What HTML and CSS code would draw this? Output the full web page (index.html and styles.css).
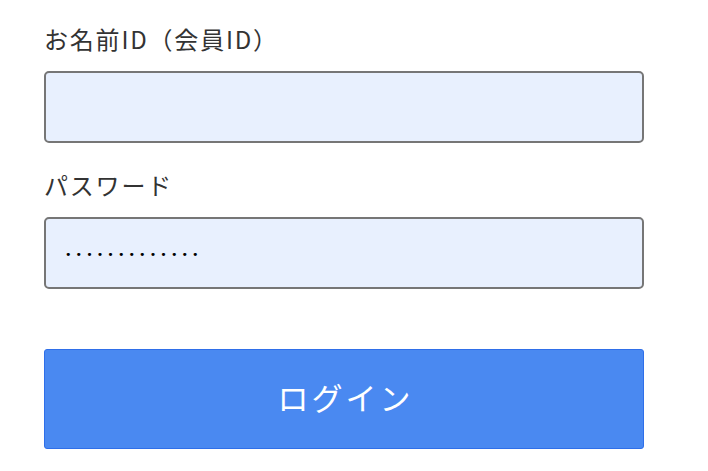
FILE: index.html
```html
<!DOCTYPE html>
<html lang="ja">
<head>
<meta charset="utf-8">
<link rel="stylesheet" href="styles.css">
</head>
<body>
<form class="login">
  <div class="field">
    <label class="label">お名前ID（会員ID）</label>
    <div class="input"></div>
  </div>
  <div class="field">
    <label class="label">パスワード</label>
    <div class="input"><span class="dots">•••••••••••••</span></div>
  </div>
  <button type="button" class="btn">ログイン</button>
</form>
</body>
</html>
```
FILE: styles.css
```css
html, body {
  margin: 0;
  padding: 0;
  background: #fff;
}
body {
  font-family: "Noto Sans CJK JP", "Noto Sans", sans-serif;
  color: #333;
}
.login {
  width: 600px;
  padding: 24px 0 0 44px;
  display: flex;
  flex-direction: column;
}
.field {
  display: flex;
  flex-direction: column;
  margin-bottom: 27px;
}
.field + .field {
  margin-bottom: 60px;
}
.label {
  display: block;
  font-size: 24px;
  line-height: 30px;
  height: 30px;
  margin-bottom: 17px;
  letter-spacing: 1.8px;
}
.input {
  box-sizing: border-box;
  height: 72px;
  width: 600px;
  background: #e8f0fe;
  border: 2px solid #767676;
  border-radius: 5px;
  display: flex;
  align-items: center;
  padding-left: 19px;
}
.dots {
  font-family: "DejaVu Sans", sans-serif;
  font-size: 11px;
  letter-spacing: 4.1px;
  color: #000;
  line-height: 1;
  margin-top: 3px;
}
.btn {
  box-sizing: border-box;
  width: 600px;
  height: 100px;
  background: #4a89f1;
  border: 1px solid #2f6fe9;
  border-radius: 3px;
  color: #fff;
  font-family: "Noto Sans CJK JP", "Noto Sans", sans-serif;
  font-size: 31px;
  letter-spacing: 3px;
  padding: 0 0 5px 3px;
  margin: 0;
}
```
